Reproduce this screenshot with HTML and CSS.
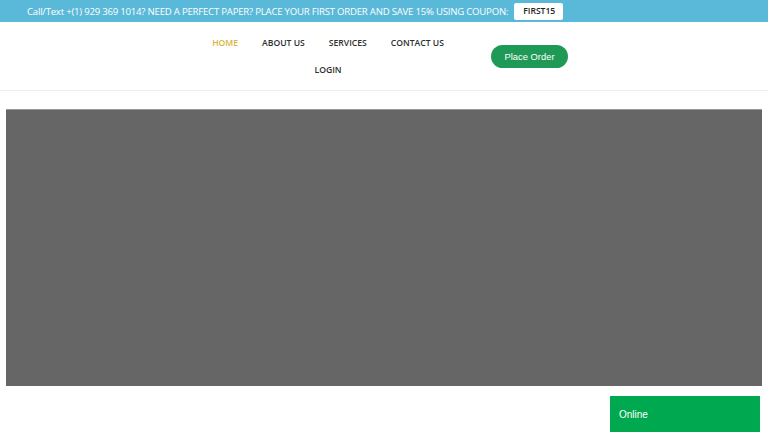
FILE: index.html
```html
<!DOCTYPE html>
<html>
<head>
<meta charset="utf-8">
<link rel="stylesheet" href="styles.css">
</head>
<body>
<div class="topbar">
  <span class="promo">Call/Text +(1) 929 369 1014? NEED A PERFECT PAPER? PLACE YOUR FIRST ORDER AND SAVE 15% USING COUPON:</span>
  <span class="coupon">FIRST15</span>
</div>
<header class="header">
  <nav class="nav">
    <a class="nav-link active" href="#">HOME</a>
    <a class="nav-link" href="#">ABOUT US</a>
    <a class="nav-link" href="#">SERVICES</a>
    <a class="nav-link" href="#">CONTACT US</a>
    <a class="nav-link" href="#">LOGIN</a>
  </nav>
  <a class="order-btn" href="#">Place Order</a>
</header>
<main class="main">
  <div class="hero"></div>
</main>
<div class="chat">Online</div>
</body>
</html>
```
FILE: styles.css
```css
* { box-sizing: border-box; }
html, body { margin: 0; padding: 0; }
body {
  font-family: "Open Sans", "DejaVu Sans", sans-serif;
  background: #fff;
  width: 768px;
  height: 432px;
  overflow: hidden;
}
a { text-decoration: none; }
.topbar {
  height: 22px;
  background: #5ab8d9;
  display: flex;
  align-items: center;
  padding-left: 27px;
  gap: 6px;
}
.promo {
  color: #fff;
  font-size: 9.6px;
  letter-spacing: -0.22px;
  white-space: nowrap;
}
.coupon {
  background: #fff;
  color: #222;
  font-size: 8.6px;
  font-weight: 600;
  padding: 0 8px 0 9px;
  height: 17px;
  line-height: 17px;
  border-radius: 2px;
}
.header {
  height: 69px;
  border-bottom: 1px solid #ececec;
  display: flex;
  justify-content: center;
  align-items: center;
  gap: 35px;
}
.nav {
  width: 256px;
  display: flex;
  flex-wrap: wrap;
  justify-content: center;
  row-gap: 11px;
}
.nav-link {
  color: #2e2e2e;
  font-size: 8.6px;
  font-weight: 600;
  padding: 0 12px;
  line-height: 16px;
}
.nav-link.active { color: #d6b43a; }
.order-btn {
  width: 77px;
  height: 23px;
  border-radius: 12px;
  background: #1f9a56;
  color: #fff;
  font-family: "Liberation Sans", Arial, sans-serif;
  font-size: 9.4px;
  display: flex;
  align-items: center;
  justify-content: center;
}
.main { padding: 18px 6px 0; }
.hero {
  height: 277px;
  background: #666;
  border-top: 1px solid #999;
}
.chat {
  position: fixed;
  right: 8px;
  bottom: 0;
  width: 150px;
  height: 36px;
  background: #00a94f;
  color: #fff;
  font-family: "Liberation Sans", Arial, sans-serif;
  font-size: 10px;
  padding-left: 9px;
  display: flex;
  align-items: center;
}
```
